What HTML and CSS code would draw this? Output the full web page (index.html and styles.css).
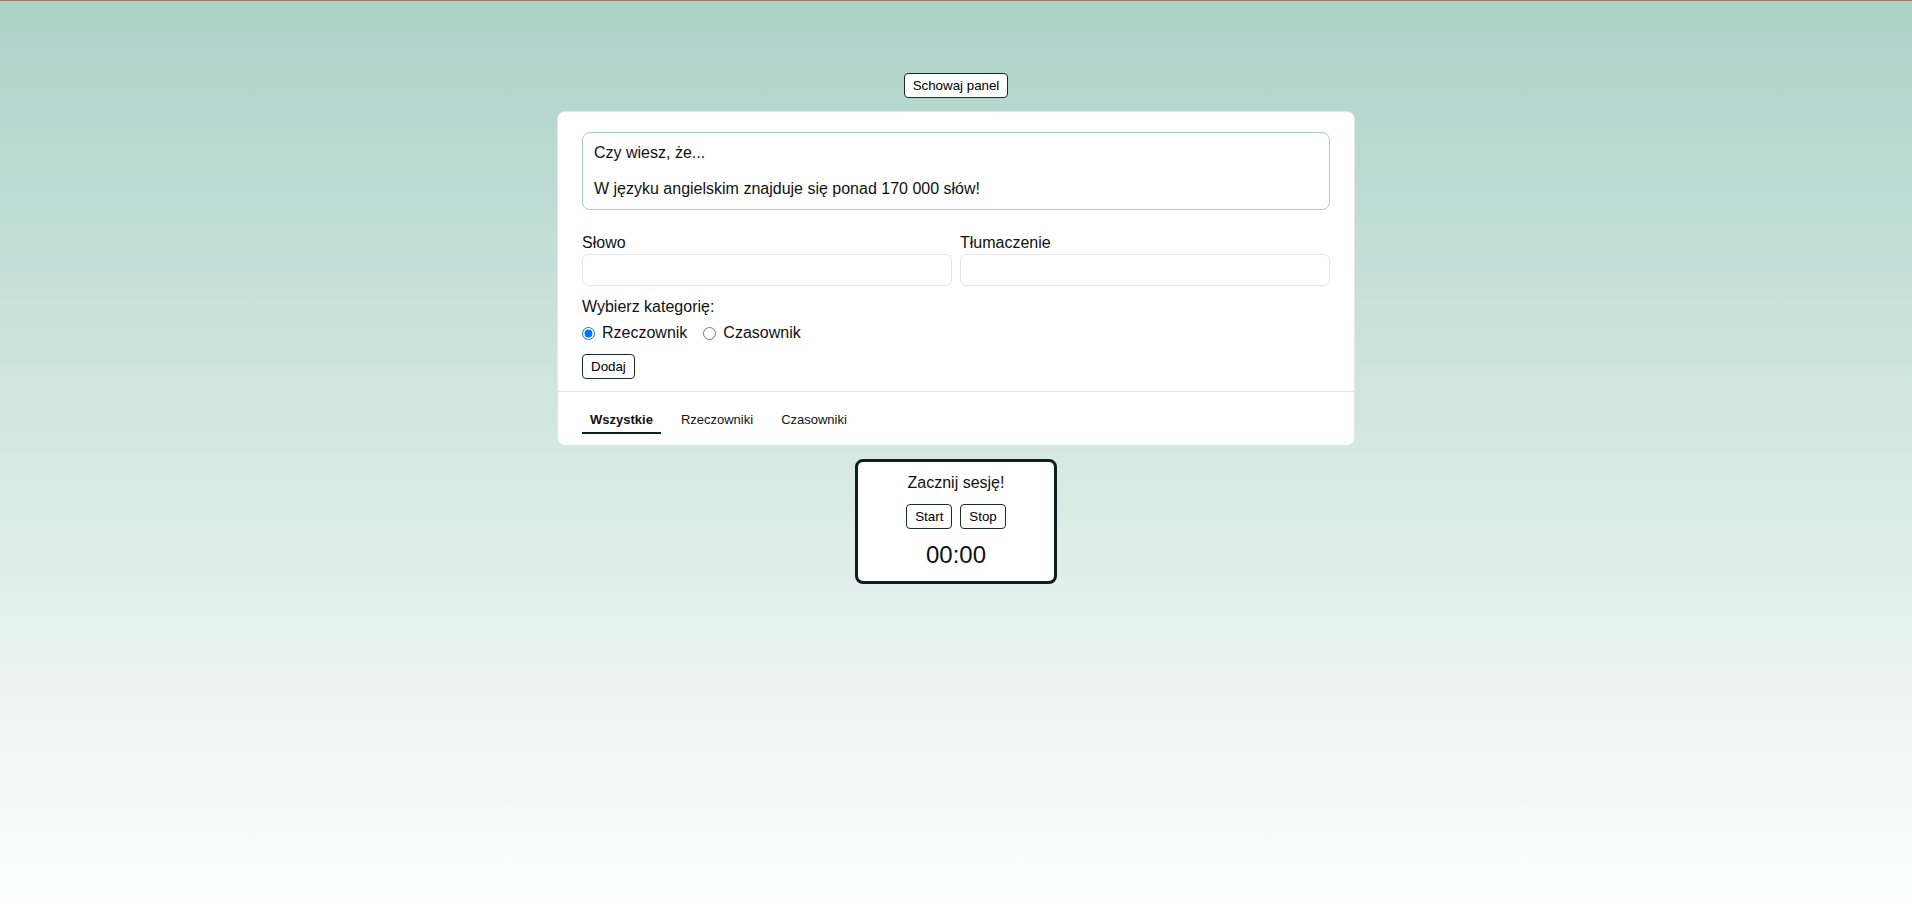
FILE: index.html
```html
<!DOCTYPE html>
<html lang="pl">
<head>
<meta charset="utf-8">
<title>Słówka</title>
<link rel="stylesheet" href="styles.css">
</head>
<body>
<div class="page">
  <button class="btn toggle-btn">Schowaj panel</button>
  <div class="card">
    <div class="card-body">
      <div class="fact">
        <p>Czy wiesz, że...</p>
        <p class="fact-text">W języku angielskim znajduje się ponad 170 000 słów!</p>
      </div>
      <div class="fields">
        <div class="field">
          <label class="field-label">Słowo</label>
          <input class="field-input" type="text">
        </div>
        <div class="field">
          <label class="field-label">Tłumaczenie</label>
          <input class="field-input" type="text">
        </div>
      </div>
      <div class="category">
        <div class="category-title">Wybierz kategorię:</div>
        <div class="radios">
          <label class="radio-label"><input class="radio" type="radio" name="cat" checked>Rzeczownik</label>
          <label class="radio-label"><input class="radio" type="radio" name="cat">Czasownik</label>
        </div>
      </div>
      <div class="actions">
        <button class="btn">Dodaj</button>
      </div>
    </div>
    <div class="tabs">
      <span class="tab active">Wszystkie</span>
      <span class="tab">Rzeczowniki</span>
      <span class="tab">Czasowniki</span>
    </div>
  </div>
  <div class="timer">
    <div class="timer-title">Zacznij sesję!</div>
    <div class="timer-buttons">
      <button class="btn">Start</button>
      <button class="btn">Stop</button>
    </div>
    <div class="timer-time">00:00</div>
  </div>
</div>
</body>
</html>
```

FILE: styles.css
```css
html {
  min-height: 100%;
  background: linear-gradient(to bottom, #acd2c6 0%, #ffffff 100%);
}
body {
  margin: 0;
  min-height: 911px;
  border-top: 1px solid #9a7c6c;
  font-family: "Liberation Sans", Arial, sans-serif;
  color: #111;
}
.page {
  display: flex;
  flex-direction: column;
  align-items: center;
  padding-top: 72px;
}
.btn {
  font-family: "Liberation Sans", Arial, sans-serif;
  font-size: 13.333px;
  line-height: 15px;
  padding: 4px 8px;
  background: #fff;
  color: #000;
  border: 1px solid #1b2b2b;
  border-radius: 4px;
}
.toggle-btn {
  margin-bottom: 13px;
}
.card {
  box-sizing: border-box;
  width: 798px;
  background: #fff;
  border: 1px solid #e4e8e6;
  border-radius: 8px;
}
.card-body {
  padding: 20px 24px 12px;
}
.fact {
  border: 1px solid #a9d0c5;
  border-radius: 8px;
  padding: 11px 11px 11px;
  font-size: 16px;
}
.fact p {
  margin: 0;
}
.fact .fact-text {
  margin-top: 18px;
}
.fields {
  display: flex;
  gap: 8px;
  margin-top: 24px;
}
.field {
  flex: 1;
  display: flex;
  flex-direction: column;
}
.field-label {
  font-size: 16px;
  margin-bottom: 2px;
}
.field-input {
  box-sizing: border-box;
  height: 32px;
  border: 1px solid #e2e5e8;
  border-radius: 6px;
  background: #fff;
}
.category {
  margin-top: 12px;
  font-size: 16px;
}
.radios {
  display: flex;
  gap: 16px;
  margin-top: 8px;
}
.radio-label {
  display: flex;
  align-items: center;
}
.radio {
  margin: 0 7px 0 0;
  width: 13px;
  height: 13px;
}
.actions {
  margin-top: 12px;
}
.tabs {
  display: flex;
  gap: 12px;
  border-top: 1px solid #e2e2e2;
  padding: 15px 24px 11px;
}
.tab {
  font-size: 13px;
  padding: 5px 8px;
  border-bottom: 2px solid transparent;
}
.tab.active {
  font-weight: bold;
  border-bottom-color: #0d2020;
}
.timer {
  box-sizing: border-box;
  width: 202px;
  margin-top: 13px;
  background: #fff;
  border: 3px solid #0d1e1e;
  border-radius: 8px;
  padding: 12px 10px 12px;
  display: flex;
  flex-direction: column;
  align-items: center;
}
.timer-title {
  font-size: 16px;
}
.timer-buttons {
  display: flex;
  gap: 8px;
  margin-top: 12px;
}
.timer-time {
  font-size: 24px;
  margin-top: 12px;
}
```
